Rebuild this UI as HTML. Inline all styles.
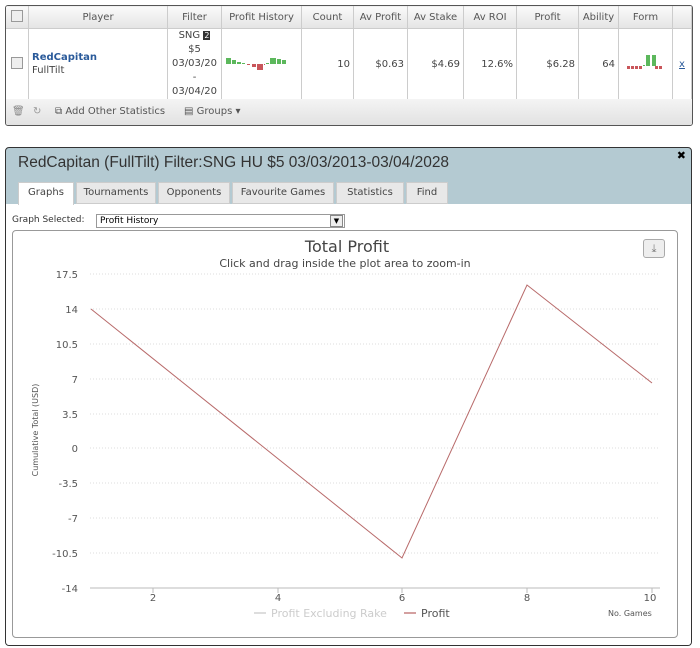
<!DOCTYPE html>
<html><head><style>
body{margin:0;width:700px;height:648px;background:#fff;font-family:"DejaVu Sans","Liberation Sans",sans-serif;position:relative;overflow:hidden}
.a{position:absolute}
table{border-collapse:collapse}
.t{position:absolute;left:5px;top:5px;width:686px;height:119px;border:1px solid #555;border-radius:3px;overflow:hidden;background:#fff}
.t td{border:1px solid #ccc;font-size:10px;color:#444;padding:0 3px;height:69px;text-align:right}
.t th{border:1px solid #ccc;font-weight:normal;font-size:10px;color:#555;height:22px;background:linear-gradient(#fafafa,#e4e4e4);padding:0}
.cb{display:inline-block;width:10px;height:10px;border:1px solid #999;background:#eee}
</style></head><body>
<div class="t">
<table style="width:687px;margin:-1px 0 0 -1px">
<tr><th style="width:22px"><span class="cb"></span></th><th style="width:138px">Player</th><th style="width:53px">Filter</th><th style="width:79px">Profit History</th><th style="width:51px">Count</th><th style="width:53px">Av Profit</th><th style="width:55px">Av Stake</th><th style="width:52px">Av ROI</th><th style="width:61px">Profit</th><th style="width:39px">Ability</th><th style="width:53px">Form</th><th></th></tr>
<tr><td style="text-align:center"><span class="cb"></span></td>
<td style="text-align:left;line-height:13px"><b style="color:#2a5a9a">RedCapitan</b><br>FullTilt</td>
<td style="text-align:center;line-height:14px;padding:0">SNG <span style="background:#333;color:#fff;font-size:8px;padding:0 1px">2</span><br>$5<br>03/03/20<br>-<br>03/04/20</td>
<td style="position:relative;padding:0"><svg class="a" style="left:4px;top:27px" width="72" height="16">
<g fill="#5cb85c"><rect x="0" y="2" width="5" height="6"/><rect x="6" y="4" width="4" height="4"/><rect x="11" y="6" width="4" height="2"/><rect x="16" y="7" width="3" height="1"/><rect x="40" y="7" width="3" height="1"/><rect x="44" y="2" width="6" height="6"/><rect x="51" y="3" width="4" height="5"/><rect x="56" y="4" width="4" height="4"/></g>
<g fill="#c9555a"><rect x="21" y="8" width="3" height="1"/><rect x="26" y="8" width="4" height="3"/><rect x="31" y="8" width="6" height="6"/><rect x="38" y="8" width="1" height="1"/></g></svg></td>
<td>10</td><td>$0.63</td><td>$4.69</td><td>12.6%</td><td>$6.28</td><td>64</td>
<td style="position:relative;padding:0"><svg class="a" style="left:8px;top:26px" width="40" height="20"><g fill="#c9555a"><rect x="0" y="11" width="3" height="3"/><rect x="4" y="11" width="3" height="3"/><rect x="8" y="11" width="3" height="3"/><rect x="12" y="11" width="3" height="3"/><rect x="28" y="11" width="3" height="3"/><rect x="32" y="11" width="3" height="3"/></g><g fill="#5cb85c"><rect x="16" y="10" width="2" height="1"/><rect x="19" y="0" width="4" height="11"/><rect x="25" y="0" width="4" height="11"/></g></svg></td>
<td style="text-align:center;color:#2a5a9a;text-decoration:underline">x</td></tr>
</table>
<div class="a" style="left:0;top:93px;width:686px;height:26px;background:linear-gradient(#f4f4f4,#e2e2e2);font-size:10px;color:#555;line-height:26px">
<span class="a" style="left:6px;color:#888">🗑</span><span class="a" style="left:27px;color:#999">↻</span><span class="a" style="left:49px">⧉ Add Other Statistics</span><span class="a" style="left:178px">▤ Groups ▾</span></div>
</div>

<div class="a" style="left:5px;top:147px;width:685px;height:497px;border:1px solid #333;border-radius:4px;background:#b4cad2;overflow:hidden">
<div class="a" style="left:12px;top:6px;font-family:'Liberation Sans',sans-serif;font-size:15.5px;color:#333">RedCapitan (FullTilt) Filter:SNG HU $5 03/03/2013-03/04/2028</div>
<div class="a" style="right:5px;top:1px;font-size:11px;font-weight:bold">✖</div>
<div class="a" style="left:0;top:56px;width:685px;height:441px;background:#fff"></div>
<div class="a" style="top:34px;left:12px;font-size:10px;color:#444">
<span class="a" style="left:0;width:54px;height:22px;background:#fff;border:1px solid #ccc;border-bottom:none;text-align:center;line-height:20px">Graphs</span>
<span class="a" style="left:58px;width:78px;height:20px;background:#e8e8e8;border:1px solid #ccc;text-align:center;line-height:20px">Tournaments</span>
<span class="a" style="left:140px;width:70px;height:20px;background:#e8e8e8;border:1px solid #ccc;text-align:center;line-height:20px">Opponents</span>
<span class="a" style="left:214px;width:100px;height:20px;background:#e8e8e8;border:1px solid #ccc;text-align:center;line-height:20px">Favourite Games</span>
<span class="a" style="left:318px;width:66px;height:20px;background:#e8e8e8;border:1px solid #ccc;text-align:center;line-height:20px">Statistics</span>
<span class="a" style="left:388px;width:40px;height:20px;background:#e8e8e8;border:1px solid #ccc;text-align:center;line-height:20px">Find</span></div>
<div class="a" style="left:6px;top:67px;font-size:9px;color:#333">Graph Selected:</div>
<div class="a" style="left:90px;top:66px;width:244px;height:12px;border:1px solid #999;font-size:9px;line-height:12px;padding-left:3px">Profit History<span class="a" style="right:1px;top:0;width:11px;height:10px;border:1px solid #888;background:#eee;font-size:7px;text-align:center;line-height:10px">▼</span></div>
</div>
<div class="a" style="left:12px;top:230px;width:664px;height:406px;border:1px solid #999;border-radius:4px;background:#fff"></div>
<div class="a" style="left:643px;top:239px;width:20px;height:17px;border:1px solid #aaa;border-radius:3px;background:#eee;font-size:11px;color:#777;text-align:center;line-height:17px">⤓</div>
<div class="a" style="left:0;top:237px;width:694px;text-align:center;font-size:16px;color:#444">Total Profit</div>
<div class="a" style="left:0;top:257px;width:690px;text-align:center;font-size:11px;color:#444">Click and drag inside the plot area to zoom-in</div>
<svg class="a" style="left:0;top:0" width="700" height="648" font-family="DejaVu Sans,sans-serif" font-size="10" fill="#555">
<g stroke="#ddd" stroke-dasharray="1,2">
<line x1="90" x2="660" y1="274" y2="274"/><line x1="90" x2="660" y1="309" y2="309"/><line x1="90" x2="660" y1="344" y2="344"/><line x1="90" x2="660" y1="379" y2="379"/><line x1="90" x2="660" y1="414" y2="414"/><line x1="90" x2="660" y1="448" y2="448"/><line x1="90" x2="660" y1="483" y2="483"/><line x1="90" x2="660" y1="518" y2="518"/><line x1="90" x2="660" y1="553" y2="553"/></g>
<line x1="90" x2="660" y1="588" y2="588" stroke="#bbb"/>
<g stroke="#bbb"><line x1="153" x2="153" y1="588" y2="593"/><line x1="278" x2="278" y1="588" y2="593"/><line x1="402" x2="402" y1="588" y2="593"/><line x1="527" x2="527" y1="588" y2="593"/><line x1="652" x2="652" y1="588" y2="593"/></g>
<g text-anchor="end"><text x="78" y="278">17.5</text><text x="78" y="313">14</text><text x="78" y="348">10.5</text><text x="78" y="383">7</text><text x="78" y="418">3.5</text><text x="78" y="452">0</text><text x="78" y="487">-3.5</text><text x="78" y="522">-7</text><text x="78" y="557">-10.5</text><text x="78" y="592">-14</text></g>
<g text-anchor="middle"><text x="153" y="601">2</text><text x="278" y="601">4</text><text x="402" y="601">6</text><text x="527" y="601">8</text><text x="650" y="601">10</text></g>
<text transform="translate(38,430) rotate(-90)" text-anchor="middle" font-size="8">Cumulative Total (USD)</text>
<polyline points="91,309 402,558 527,285 652,383" fill="none" stroke="#b86a6a" stroke-width="1"/>
<line x1="254" x2="266" y1="613" y2="613" stroke="#ddd" stroke-width="2"/><text x="271" y="617" font-size="11" fill="#ccc">Profit Excluding Rake</text>
<line x1="404" x2="416" y1="613" y2="613" stroke="#d4a0a0" stroke-width="2"/><text x="421" y="617" font-size="11" fill="#555">Profit</text>
<text x="608" y="616" font-size="8">No. Games</text>
</svg>
</body></html>
